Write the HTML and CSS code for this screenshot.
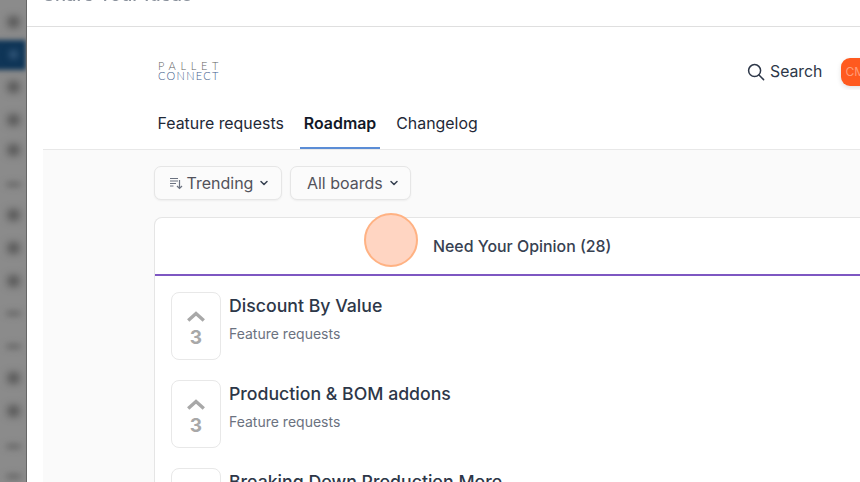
FILE: index.html
```html
<!DOCTYPE html>
<html lang="en">
<head>
<meta charset="utf-8">
<title>Share Your Ideas</title>
<link rel="stylesheet" href="styles.css">
</head>
<body>
<div class="app">
  <aside class="rail">
    <i class="blob b1"></i><i class="active"></i><i class="active-dot"></i><i class="blob b2"></i><i class="blob b3"></i><i class="blob b4"></i>
    <i class="blob faint b5"></i><i class="blob b6"></i><i class="blob b7"></i><i class="blob b8"></i><i class="blob faint b9"></i>
    <i class="blob faint b10"></i><i class="blob b11"></i><i class="blob b12"></i><i class="blob faint b13"></i><i class="blob faint b14"></i>
  </aside>
  <main class="panel">
    <div class="topbar"><span class="topbar-title">Share Your Ideas</span></div>
    <div class="frame">
      <header class="site-head">
        <div class="brand-row">
          <div class="logo"><span class="logo-top">PALLET</span><span class="logo-bottom">CONNECT</span></div>
          <div class="actions">
            <span class="search">
              <svg width="18" height="18" viewBox="0 0 18 18" fill="none" stroke="#2d3748" stroke-width="1.5" stroke-linecap="round"><circle cx="7.6" cy="7.6" r="6"/><path d="M12 12l4.6 4.6"/></svg>
              Search
            </span>
            <span class="avatar">CM</span>
          </div>
        </div>
        <nav class="tabs">
          <a class="tab">Feature requests</a>
          <a class="tab tab-active">Roadmap</a>
          <a class="tab">Changelog</a>
        </nav>
      </header>
      <section class="body">
        <div class="filters">
          <button class="filter">
            <svg width="14" height="14" viewBox="0 0 14 14" fill="none" stroke="#6b7280" stroke-width="1.1"><path d="M1 2.5h8M1 5h8M1 7.500h6M1 10h3.500"/><path d="M10.500 4v8.500M8 10l2.500 2.500L13 10" stroke-width="1.200"/></svg>
            Trending
            <svg class="chev" width="10" height="10" viewBox="0 0 10 10" fill="none" stroke="#374151" stroke-width="1.500" stroke-linecap="round" stroke-linejoin="round"><path d="M2 3.500L5 6.500L8 3.500"/></svg>
          </button>
          <button class="filter filter-boards">
            All boards
            <svg class="chev" width="10" height="10" viewBox="0 0 10 10" fill="none" stroke="#374151" stroke-width="1.500" stroke-linecap="round" stroke-linejoin="round"><path d="M2 3.500L5 6.500L8 3.500"/></svg>
          </button>
        </div>
        <div class="column">
          <div class="column-head"><span class="marker"></span><span>Need Your Opinion (28)</span></div>
          <div class="cards">
            <article class="card">
              <div class="vote"><svg width="18" height="11" viewBox="0 0 18 11" fill="none" stroke="#a8a8a8" stroke-width="3.400"><path d="M1.200 9.500L9 2.500L16.800 9.500"/></svg><b>3</b></div>
              <div class="card-text"><h3>Discount By Value</h3><p>Feature requests</p></div>
            </article>
            <article class="card">
              <div class="vote"><svg width="18" height="11" viewBox="0 0 18 11" fill="none" stroke="#a8a8a8" stroke-width="3.400"><path d="M1.200 9.500L9 2.500L16.800 9.500"/></svg><b>3</b></div>
              <div class="card-text"><h3>Production &amp; BOM addons</h3><p>Feature requests</p></div>
            </article>
            <article class="card">
              <div class="vote"><svg width="18" height="11" viewBox="0 0 18 11" fill="none" stroke="#a8a8a8" stroke-width="3.400"><path d="M1.200 9.500L9 2.500L16.800 9.500"/></svg><b>3</b></div>
              <div class="card-text"><h3>Breaking Down Production More</h3><p>Feature requests</p></div>
            </article>
          </div>
        </div>
      </section>
    </div>
  </main>
</div>
</body>
</html>
```
FILE: styles.css
```css
* { box-sizing: border-box; }
html, body { margin: 0; height: 100%; overflow: hidden; }
body { font-family: Inter, "Liberation Sans", sans-serif; color: #1f2937; background: #fff; }
.app { display: flex; width: 860px; height: 482px; overflow: hidden; }

.rail { position: relative; flex: 0 0 27px; background: #8b8b8b; border-right: 1px solid #666; overflow: hidden; }
.rail i { position: absolute; display: block; }
.blob { left: 8px; width: 11px; height: 10px; background: #4a4a4a; filter: blur(4px); border-radius: 3px; }
.blob.faint { height: 5px; background: #666; left: 6px; width: 15px; filter: blur(3px); }
.active { left: -6px; top: 40px; width: 32px; height: 30px; background: #0f3557; filter: blur(2.500px); }
.active-dot { left: 9px; top: 50px; width: 9px; height: 9px; background: #34587a; filter: blur(3px); border-radius: 50%; }
.b1 { top: 17px; } .b2 { top: 82px; } .b3 { top: 115px; } .b4 { top: 145px; }
.b5 { top: 182px; } .b6 { top: 210px; } .b7 { top: 243px; } .b8 { top: 276px; } .b9 { top: 311px; } .b10 { top: 344px; }
.b11 { top: 373px; } .b12 { top: 406px; } .b13 { top: 444px; } .b14 { top: 474px; }

.panel { flex: 1; min-width: 0; display: flex; flex-direction: column; background: #fff; }
.topbar { height: 27px; flex: none; border-bottom: 1px solid #dfdfdf; padding-left: 16px; overflow: hidden; }
.topbar-title { display: block; margin-top: -17px; font-size: 18.400px; line-height: 22px; font-weight: 500; color: #8a919c; filter: blur(.6px); }
.frame { flex: 1; min-height: 0; margin-left: 16px; display: flex; flex-direction: column; }

.site-head { flex: none; height: 123px; background: #fff; border-bottom: 1px solid #e8e8e8; padding-left: 111px; }
.brand-row { display: flex; justify-content: space-between; align-items: center; height: 37px; margin-top: 26px; }
.logo { display: flex; flex-direction: column; margin-left: 4px; margin-top: -1px; font-family: Lato, "Liberation Sans", sans-serif; font-weight: 300; line-height: 10px; font-size: 11px; }
.logo-top { color: #5f5f5f; letter-spacing: 4.700px; }
.logo-bottom { color: #3d5a8a; letter-spacing: 1.300px; }
.actions { display: flex; align-items: center; width: 113px; height: 37px; flex: none; gap: 19px; overflow: hidden; }
.search { display: flex; align-items: center; gap: 5px; font-size: 15.800px; color: #2d3748; white-space: nowrap; }
.avatar { flex: none; width: 36px; height: 28px; border-radius: 9px; background: #ff5a1f; color: #ff9d78; font-size: 12px; line-height: 28px; padding-left: 4px; box-shadow: 0 2px 5px rgba(0,0,0,.12); }
.tabs { display: flex; margin-top: 21px; height: 38px; }
.tab { display: block; height: 38px; padding: 1px 3.500px 0; margin-right: 13px; font-size: 15.900px; line-height: 24px; color: #1f2937; white-space: nowrap; }
.tab-active { font-weight: 600; border-bottom: 2px solid #5b8dd6; color: #111827; }

.body { flex: 1; min-height: 0; background: #fafafa; padding: 16px 0 0 111px; overflow: hidden; }
.filters { display: flex; gap: 8px; }
.filter { display: flex; align-items: center; gap: 4px; height: 34px; padding: 0 11.500px 0 13.500px; background: #fbfbfb; border: 1px solid #e6e6e6; border-radius: 7px; box-shadow: 0 1px 2px rgba(0,0,0,.05); font: 16px Inter, "Liberation Sans", sans-serif; color: #52525b; }
.filter-boards { padding: 0 11px 0 16px; }
.chev { margin-left: 2px; }

.column { width: 760px; margin-top: 17px; background: #fff; border: 1px solid #e5e5e5; border-bottom: 0; border-radius: 8px 8px 0 0; }
.column-head { position: relative; height: 58px; border-bottom: 2px solid #7e57c2; display: flex; align-items: center; padding-left: 278px; font-size: 15.900px; font-weight: 500; color: #374151; }
.marker { position: absolute; left: 209px; top: -5px; width: 54px; height: 54px; border-radius: 50%; background: #ffd5c2; border: 2px solid #ffb283; }
.cards { padding: 16px 16px 0; display: flex; flex-direction: column; gap: 20px; }
.card { display: flex; gap: 8px; height: 68px; }
.vote { flex: none; width: 50px; height: 68px; border: 1px solid #e8e8e8; border-radius: 8px; display: flex; flex-direction: column; align-items: center; padding-top: 18px; gap: 5px; }
.vote b { font-size: 19px; line-height: 22px; font-weight: 700; color: #a8a8a8; }
.card-text { margin-top: 1px; }
.card-text h3 { margin: 0; font-size: 17.700px; line-height: 26px; font-weight: 500; color: #2d3748; }
.card-text p { margin: 5px 0 0; font-size: 14px; line-height: 20px; color: #6b7280; }
```
